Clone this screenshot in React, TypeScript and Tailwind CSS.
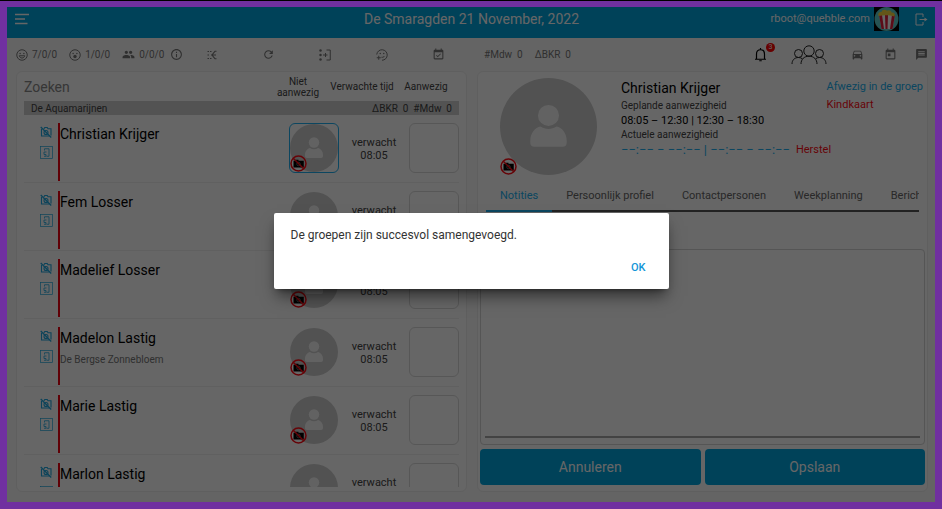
import { clsx } from "clsx";
import {
  MdDirectionsCar,
  MdEventAvailable,
  MdInfoOutline,
  MdMessage,
  MdPeople,
  MdRefresh,
  MdToday,
} from "react-icons/md";

const children = [
  { id: 1, name: "Christian Krijger", location: "", time: "08:05", selected: true },
  { id: 2, name: "Fem Losser", location: "", time: "08:05", selected: false },
  { id: 3, name: "Madelief Losser", location: "", time: "08:05", selected: false },
  { id: 4, name: "Madelon Lastig", location: "De Bergse Zonnebloem", time: "08:05", selected: false },
  { id: 5, name: "Marie Lastig", location: "", time: "08:05", selected: false },
  { id: 6, name: "Marlon Lastig", location: "", time: "08:05", selected: false },
]

const tabs = ["Notities", "Persoonlijk profiel", "Contactpersonen", "Weekplanning", "Berichten"]

function MenuIcon() {
  return (
    <svg width="14" height="12" viewBox="0 0 14 12" fill="none" stroke="currentColor" strokeWidth="1.7">
      <path d="M0 1.5h14M0 6h10M0 10.5h12.5" />
    </svg>
  )
}

function FaceIcon({ open }: { open?: boolean }) {
  return (
    <svg width="12" height="12" viewBox="0 0 24 24" fill="none" stroke="currentColor" strokeWidth="2">
      <circle cx="12" cy="12" r="10.5" />
      <circle cx="8.3" cy="9" r="1.5" fill="currentColor" stroke="none" />
      <circle cx="15.7" cy="9" r="1.5" fill="currentColor" stroke="none" />
      {open ? (
        <circle cx="12" cy="15" r="3.4" fill="currentColor" stroke="none" />
      ) : (
        <path d="M6.5 13.5h11c-.8 3-2.8 4.5-5.5 4.5s-4.7-1.5-5.5-4.5z" />
      )}
    </svg>
  )
}

function MergeIcon() {
  return (
    <svg width="10" height="10" viewBox="0 0 20 20" fill="none" stroke="currentColor" strokeWidth="2.4">
      <path d="M1 3h3M1 10h3M1 17h3M6 3h3M6 17h3" />
      <path d="M8 10h10M19 2.5h-3L10 10l6 7.500h3" />
    </svg>
  )
}

function EnterIcon() {
  return (
    <svg width="12" height="12" viewBox="0 0 24 24" fill="none" stroke="currentColor" strokeWidth="2">
      <circle cx="3" cy="3" r="2.5" fill="currentColor" stroke="none" />
      <circle cx="3" cy="12" r="2.5" fill="currentColor" stroke="none" />
      <circle cx="3" cy="21" r="2.5" fill="currentColor" stroke="none" />
      <path d="M15 2h7.5v20H15M8 12h9M13 8v8" />
    </svg>
  )
}

function FaceAddIcon() {
  return (
    <svg width="12" height="12" viewBox="0 0 24 24" fill="none" stroke="currentColor" strokeWidth="2">
      <path d="M1.500 11A10.500 10.500 0 1 1 12 22.500" />
      <path d="M5.500 13.500v8M1.500 17.500h8" />
      <path d="M11 16.500c2.500.6 4.700-.3 6-2.500" />
      <circle cx="8.500" cy="9" r="1.500" fill="currentColor" stroke="none" />
      <circle cx="15.500" cy="9" r="1.500" fill="currentColor" stroke="none" />
    </svg>
  )
}

function BellIcon() {
  return (
    <svg width="13" height="15" viewBox="0 0 26 30" fill="none" stroke="currentColor" strokeWidth="2.4">
      <path d="M2 24.5h22M5 24V14c0-5 3.500-8.500 8-8.500s8 3.500 8 8.500v10" />
      <path d="M13 5.5V2M10.5 27.5h5" />
    </svg>
  )
}

function GroupIcon() {
  return (
    <svg width="36" height="20" viewBox="0 0 36 20" fill="none" stroke="currentColor">
      <circle cx="18" cy="6" r="5.2" />
      <circle cx="7.5" cy="8.5" r="4" />
      <circle cx="28.5" cy="8.5" r="4" />
      <path d="M10 19c0-4.500 3-7.800 8-7.800s8 3.300 8 7.800" />
      <path d="M1 19c0-3.800 2.500-6.500 6.500-6.500 1.700 0 3 .5 4 1.400M35 19c0-3.800-2.500-6.500-6.500-6.500-1.700 0-3 .5-4 1.400" />
    </svg>
  )
}

function LogoutIcon() {
  return (
    <svg width="13" height="13" viewBox="0 0 26 26" fill="none" stroke="currentColor" strokeWidth="2">
      <path d="M16 8V2H2v22h14v-6M9 13h12" />
      <path d="M19 9l6 4-6 4z" fill="currentColor" stroke="none" />
    </svg>
  )
}

function PopcornIcon() {
  return (
    <svg width="25" height="24" viewBox="0 0 25 24">
      <rect width="25" height="24" fill="#000" />
      <circle cx="12.5" cy="12" r="12" fill="#5fd0cf" />
      <path d="M5 8h16l-2.500 14H7.500z" fill="#fff" />
      <path d="M5 8h3l2 14H7.500zM11 8h3l-.5 14h-2zM18 8h3l-2.500 14H16z" fill="#e0203c" />
      <path d="M4.500 9c-1-3 1-4.500 3-4 .5-2.500 4-3 5.500-1.200 2-1.300 4.500 0 4.500 1.700 2.500-.5 4 1.500 3 4-5-1.500-11-1.500-16-.5z" fill="#fbd83c" />
    </svg>
  )
}

function CameraOffIcon() {
  return (
    <svg width="12" height="12" viewBox="0 0 24 24" fill="none" stroke="currentColor" strokeWidth="2.2">
      <path d="M7 5.500h1L9.500 3h5L16 5.500h6V19M3 6v14h16.500" />
      <circle cx="12" cy="13" r="4" />
      <path d="M1.500 2l21 21" strokeWidth="2.6" />
    </svg>
  )
}

function DoorIcon() {
  return (
    <svg width="13" height="13" viewBox="0 0 26 26" fill="none" stroke="currentColor" strokeWidth="1.4">
      <rect x="1" y="1" width="24" height="24" />
      <path d="M9 9V5.500h9v15h-5M8 12h5M8 12v5h4v3.500H8" strokeWidth="1.6" />
    </svg>
  )
}

function Person({ className }: { className?: string }) {
  return (
    <svg className={className} viewBox="0 0 48 48">
      <circle cx="24" cy="24" r="24" fill="#cdcdcd" />
      <path d="M15 31c0-4 2.500-6.500 5-7 2.300 1.600 5.700 1.600 8 0 2.500.5 5 3 5 7v1c0 1.200-.8 2-2 2H17c-1.200 0-2-.8-2-2z" fill="#f6f6f6" />
      <circle cx="24" cy="18.500" r="5.200" fill="#f6f6f6" />
    </svg>
  )
}

function NoPhotoBadge() {
  return (
    <svg className="absolute left-0 bottom-0" width="17" height="17" viewBox="0 0 34 34" fill="none">
      <path d="M7 11.500h4v-2h6v2h10.500V25H7z" fill="#000" />
      <circle cx="17" cy="18" r="3.5" stroke="#999" strokeWidth="1.2" />
      <circle cx="17" cy="17" r="15" stroke="#ff0a14" strokeWidth="3" />
      <path d="M6.500 6.500l21 21" stroke="#ff0a14" strokeWidth="3" />
    </svg>
  )
}

export default function App() {
  return (
    <div className="h-screen bg-black pt-px font-[Roboto,sans-serif]">
      <div className="relative flex h-full flex-col border-[7px] border-t-[6px] border-[#7030a0] bg-[#fbfbfb] text-[#444]">
        <header className="grid shrink-0 grid-cols-[1fr_auto_1fr] items-start bg-[#00a5df] pb-[7px] pl-2 pr-[7px] text-white">
          <button aria-label="Menu" className="flex h-6 w-fit items-center">
            <MenuIcon />
          </button>
          <h1 className="text-sm leading-6">De Smaragden 21 November, 2022</h1>
          <div className="flex items-center justify-end text-[11px]">
            <span>rboot@quebble.com</span>
            <span className="ml-1">
              <PopcornIcon />
            </span>
            <button aria-label="Uitloggen" className="ml-4">
              <LogoutIcon />
            </button>
          </div>
        </header>

        <div className="grid shrink-0 grid-cols-2 gap-[10px] pl-[9px] pr-[7px] text-[10px] text-[#777]">
          <div className="flex h-[33px] items-center">
            <span className="flex items-center gap-1"><FaceIcon /> 7/0/0</span>
            <span className="ml-3 flex items-center gap-1"><FaceIcon open /> 1/0/0</span>
            <span className="ml-3 flex items-center gap-1"><MdPeople size={13} /> 0/0/0</span>
            <button aria-label="Informatie" className="ml-1.5"><MdInfoOutline size={13} /></button>
            <div className="flex flex-1">
              <button aria-label="Groepen samenvoegen" className="flex flex-1 items-center justify-center"><MergeIcon /></button>
              <button aria-label="Vernieuwen" className="flex flex-1 items-center justify-center"><MdRefresh size={13} /></button>
              <button aria-label="Aanmelden" className="flex flex-1 items-center justify-center"><EnterIcon /></button>
              <button aria-label="Kind toevoegen" className="flex flex-1 items-center justify-center"><FaceAddIcon /></button>
              <button aria-label="Dagplanning" className="flex flex-1 items-center justify-center"><MdEventAvailable size={13} /></button>
            </div>
          </div>
          <div className="flex h-[33px] items-center pl-[7px]">
            <span className="mr-3 whitespace-pre">#Mdw  0</span>
            <span className="whitespace-pre">ΔBKR  0</span>
            <div className="ml-auto flex items-center">
              <button aria-label="Meldingen" className="relative mr-6 text-black">
                <BellIcon />
                <span className="absolute -top-1 left-3 flex size-[9px] items-center justify-center rounded-full bg-[#ff0000] text-[7px] text-white">3</span>
              </button>
              <button aria-label="Groep" className="mr-6 text-[#222]"><GroupIcon /></button>
              <button aria-label="Vervoer" className="mr-5"><MdDirectionsCar size={13} /></button>
              <button aria-label="Agenda" className="mr-[18px]"><MdToday size={13} /></button>
              <button aria-label="Berichten"><MdMessage size={13} /></button>
            </div>
          </div>
        </div>

        <main className="grid min-h-0 flex-1 grid-cols-2 gap-[10px] pb-[10px] pl-[9px] pr-[7px]">
          <section className="flex min-h-0 flex-col rounded-md border border-[#eee] bg-white px-[7px] pb-1">
            <div className="flex h-[29px] shrink-0 items-center pr-2 text-center text-[10px] leading-[11px]">
              <input
                aria-label="Zoeken"
                placeholder="Zoeken"
                className="w-0 flex-1 bg-transparent text-sm outline-none placeholder:text-[#888]"
              />
              <span className="w-[50px]">Niet aanwezig</span>
              <span className="w-[78px]">Verwachte tijd</span>
              <span className="w-[50px]">Aanwezig</span>
            </div>
            <div className="flex h-[14px] shrink-0 items-center justify-between bg-[#cfcfcf] px-[7px] text-[10px]">
              <span>De Aquamarijnen</span>
              <span className="whitespace-pre">ΔBKR  0  #Mdw  0</span>
            </div>
            <ul className="min-h-0 flex-1 overflow-hidden">
              {children.map((child) => (
                <li key={child.id} className="flex border-b border-[#efefef] pb-px pl-4 pt-2">
                  <div className="flex w-[18px] flex-col gap-2 pt-[3px] text-[#20a8e0]">
                    <CameraOffIcon />
                    <DoorIcon />
                  </div>
                  <div className="h-[58px] flex-1 border-l-2 border-[#f00010]">
                    <p className="text-sm leading-[22px] text-black">{child.name}</p>
                    <p className="text-[10px] leading-[22px] text-[#777]">{child.location}</p>
                  </div>
                  <button
                    aria-label={child.name}
                    className={clsx(
                      "relative size-[50px] rounded-md border",
                      child.selected ? "border-[#20b0f0]" : "border-transparent"
                    )}
                  >
                    <Person className="size-12" />
                    <NoPhotoBadge />
                  </button>
                  <p className="w-[70px] pt-[13px] text-center text-[11px] leading-[13px]">
                    verwacht
                    <br />
                    {child.time}
                  </p>
                  <button aria-label={`${child.name} aanwezig`} className="size-[50px] rounded-md border border-[#dadada]" />
                </li>
              ))}
            </ul>
          </section>

          <section className="flex min-h-0 min-w-0 flex-col rounded-md border border-[#eee] bg-white px-0.5 pb-1.5">
            <div className="flex shrink-0 pl-5 pr-0.5 pt-1.5">
              <div className="relative size-[97px] shrink-0">
                <Person className="size-[97px]" />
                <NoPhotoBadge />
              </div>
              <div className="ml-6 w-0 flex-1 whitespace-nowrap">
                <h2 className="text-sm leading-5 text-black">Christian Krijger</h2>
                <p className="text-[10px] leading-[15px]">Geplande aanwezigheid</p>
                <p className="text-[11px] leading-[15px] text-black">08:05 – 12:30 | 12:30 – 18:30</p>
                <p className="text-[10px] leading-[14px]">Actuele aanwezigheid</p>
                <p className="flex gap-1.5 leading-4">
                  <span className="text-[13px] text-[#20b0f0]">−−:−− − −−:−− | −−:−− − −−:−−</span>
                  <button className="text-[11px] text-[#ff0a14]">Herstel</button>
                </p>
              </div>
              <div className="flex flex-col items-start whitespace-nowrap text-[11px] leading-[18px]">
                <a href="#afwezig" className="text-[#20b0f0]">Afwezig in de groep</a>
                <a href="#kindkaart" className="text-[#ff0a14]">Kindkaart</a>
              </div>
            </div>

            <nav className="mx-1.5 mt-2 flex h-[29px] shrink-0 overflow-hidden text-[11px]">
              {tabs.map((tab, i) => (
                <button
                  key={tab}
                  className={clsx(
                    "shrink-0 border-b-2 px-3.5",
                    i === 0 ? "border-[#20b0f0] text-[#20b0f0]" : "border-[#555] text-[#666]"
                  )}
                >
                  {tab}
                </button>
              ))}
            </nav>

            <div className="mt-[37px] flex flex-1 rounded border border-[#d4d4d4] px-1 pb-1.5">
              <textarea aria-label="Notities" className="flex-1 resize-none border-b-2 border-[#a8a8a8] outline-none" />
            </div>

            <div className="mt-1 grid shrink-0 grid-cols-2 gap-1 text-sm text-white">
              <button className="h-9 rounded bg-[#00a5df]">Annuleren</button>
              <button className="h-9 rounded bg-[#00a5df]">Opslaan</button>
            </div>
          </section>
        </main>

        <div className="absolute inset-0 flex items-center justify-center bg-black/60 pb-2">
          <div role="dialog" aria-modal="true" className="w-[395px] max-w-full rounded-xs bg-white pb-3 pl-[17px] pr-4 pt-3 shadow-lg shadow-black/50">
            <p className="text-xs leading-5 text-[#333]">De groepen zijn succesvol samengevoegd.</p>
            <div className="mt-3.5 flex justify-end pr-[7px]">
              <button className="text-[11px] font-medium leading-[18px] text-[#1496d8]">OK</button>
            </div>
          </div>
        </div>
      </div>
    </div>
  )
}
